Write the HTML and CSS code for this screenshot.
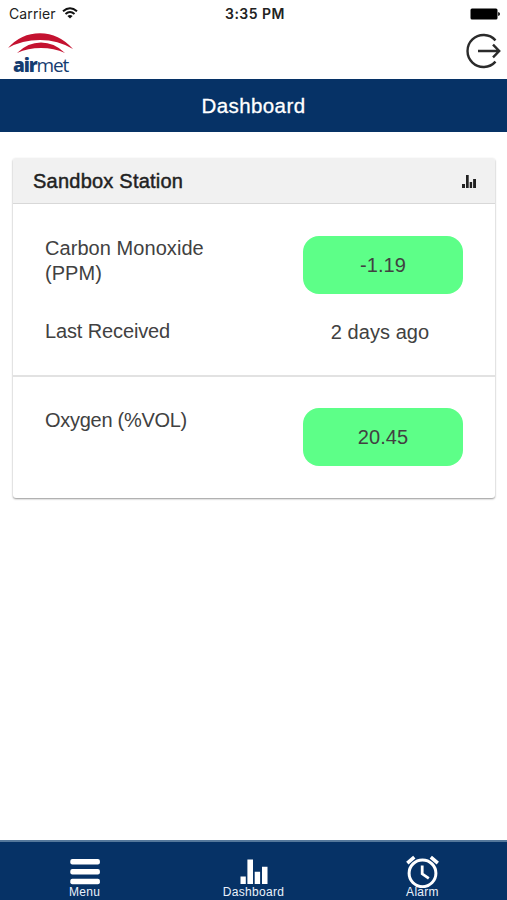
FILE: index.html
```
<!DOCTYPE html>
<html lang="en">
<head>
<meta charset="utf-8">
<title>Dashboard</title>
<link rel="stylesheet" href="styles.css">
</head>
<body>
<div class="status">
  <div class="carrier"><span>Carrier</span>
    <svg width="16" height="12" viewBox="0 0 16 12" fill="none" stroke="#111" stroke-width="2"><path d="M1 4.3Q8-1.8 15 4.3M3.5 7Q8 3 12.5 7"/><path d="M8 11.6L5.4 9.1Q8 7 10.6 9.1Z" fill="#111" stroke="none"/></svg>
  </div>
  <span class="time">3:35 PM</span>
  <svg class="battery" width="30" height="12" viewBox="0 0 30 12"><rect x=".5" y=".5" width="27" height="11" rx="1.5"/><path d="M28.2 4Q30 4.4 30 6T28.2 8Z"/></svg>
</div>
<header class="brand">
  <div class="logo">
    <svg width="66" height="22" viewBox="0 0 66 22" fill="#c41230"><path d="M0 15Q13 .2 32 .2T65 16Q50 7 32 7T0 15Z"/><path d="M9 20Q20 9.6 33 9.6T57 20Q46 15 33 15T9 20Z"/></svg>
    <div class="wordmark"><b>air</b>met</div>
  </div>
  <svg class="logout" width="36" height="36" viewBox="0 0 36 36" fill="none" stroke="#2b2b2b" stroke-width="2.4"><path d="M30.5 7.4A16 16 0 1 0 30.5 28.6M13 18H34M28 11.7L34.2 18L28 24.3"/></svg>
</header>
<div class="title">Dashboard</div>
<main>
  <section class="card">
    <div class="card-head"><span>Sandbox Station</span>
      <svg width="14" height="13" viewBox="0 0 14 13" fill="#222"><path d="M0 9h3v4H0zM4 0h2.7v13H4zM7.7 7h2.4v6H7.7zM11.1 4H14v9h-2.9z"/></svg>
    </div>
    <div class="sensor">
      <div class="label">Carbon Monoxide (PPM)</div><div class="value">-1.19</div>
      <div class="label received">Last Received</div><div class="ago">2 days ago</div>
    </div>
    <div class="sensor last">
      <div class="label oxygen">Oxygen (%VOL)</div><div class="value">20.45</div>
    </div>
  </section>
</main>
<nav>
  <div class="tab"><svg width="34" height="34" viewBox="0 0 34 34" fill="#fff"><rect x="2.3" y="5" width="29.6" height="5.5" rx="2"/><rect x="2.3" y="14.9" width="29.6" height="5.5" rx="2"/><rect x="2.3" y="24.7" width="29.6" height="5.5" rx="2"/></svg><span>Menu</span></div>
  <div class="tab"><svg width="34" height="34" viewBox="0 0 34 34" fill="#fff"><path d="M3.5 22.5h5.3V30H3.5zM10.4 5.4H16V30h-5.6zM17.7 17.8h5.4V30h-5.4zM25 12.8h5.5V30H25z"/></svg><span>Dashboard</span></div>
  <div class="tab"><svg width="34" height="34" viewBox="0 0 34 34" fill="none" stroke="#fff"><circle cx="16.5" cy="19.3" r="13.4" stroke-width="3"/><path d="M16.2 11.6V19.8L22.8 24.3" stroke-width="2.8"/><path d="M1.3 9.1L8.3 3.2M24.8 3.2L31.8 9.1" stroke-width="3.6"/></svg><span>Alarm</span></div>
</nav>
</body>
</html>
```
FILE: styles.css
```
* { box-sizing: border-box; }
body {
  margin: 0;
  height: 900px;
  display: flex;
  flex-direction: column;
  overflow: hidden;
  background: #fff;
  color: #414141;
  font: 20px/24px "Liberation Sans", Arial, sans-serif;
}
svg { display: block; flex: none; }
.status {
  height: 28px;
  display: grid;
  grid-template-columns: 1fr auto 1fr;
  align-items: center;
  padding: 0 7px 0 9px;
  color: #222;
  font: 14px/28px Inter, sans-serif;
}
.carrier { display: flex; align-items: center; gap: 6px; letter-spacing: .1px; }
.carrier svg { margin-top: -3px; }
.time { font-weight: 600; letter-spacing: .5px; padding-left: 1px; }
.battery { justify-self: end; fill: #000; margin-top: -1px; }
.brand {
  height: 51px;
  display: flex;
  justify-content: space-between;
  padding: 5px 6px 0 8px;
}
.wordmark {
  margin: 0 0 0 5px;
  color: #143c70;
  font: 19px/20px "Open Sans", sans-serif;
  letter-spacing: -1.15px;
}
.wordmark b { font-weight: 800; }
.title {
  height: 53px;
  background: #063266;
  color: #fff;
  text-align: center;
  font-size: 20.5px;
  line-height: 54px;
  letter-spacing: .4px;
  -webkit-text-stroke: .3px #fff;
}
main { flex: 1; padding: 26px 12px 0 13px; }
.card {
  height: 340px;
  border-radius: 3px;
  box-shadow: 0 1px 2px rgba(0, 0, 0, .42);
  overflow: hidden;
}
.card-head {
  height: 46px;
  display: flex;
  justify-content: space-between;
  align-items: center;
  padding: 1px 19px 0 20px;
  background: #f1f1f1;
  border-bottom: 1px solid #d8d8d8;
  color: #222;
  letter-spacing: .23px;
}
.card-head span { -webkit-text-stroke: .45px #222; }
.sensor {
  height: 173px;
  display: grid;
  grid-template-columns: 190px 160px;
  justify-content: space-between;
  align-content: start;
  padding: 32px;
  border-bottom: 2px solid #e2e2e2;
}
.sensor.last { height: 121px; padding-top: 31px; border: 0; }
.label { letter-spacing: .06px; line-height: 25px; }
.value {
  height: 58px;
  border-radius: 16px;
  background: #5dff88;
  line-height: 59px;
  text-align: center;
  letter-spacing: .05px;
}
.ago { margin: 26px 6px 0 0; text-align: center; letter-spacing: .05px; }
.label.received { margin-top: 25px; letter-spacing: -.13px; }
.label.oxygen { letter-spacing: -.28px; }
nav {
  height: 60px;
  display: flex;
  justify-content: space-between;
  background: #063266;
  border-top: 2px solid #55789b;
}
.tab {
  width: 169px;
  display: flex;
  flex-direction: column;
  align-items: center;
  padding-top: 12px;
  color: #e9f1fb;
  font-size: 12px;
  line-height: 14px;
}
.tab svg { margin-bottom: -3px; }
.tab span { z-index: 1; letter-spacing: .3px; }
```
